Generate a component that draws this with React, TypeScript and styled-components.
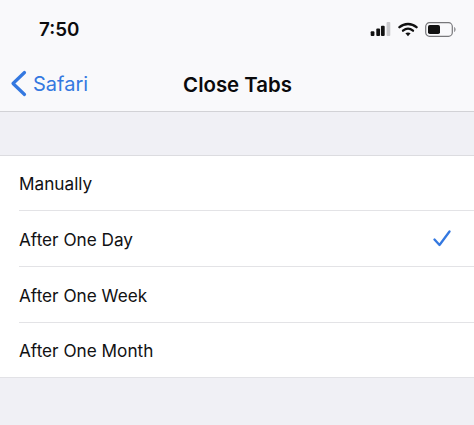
import styled, { createGlobalStyle } from "styled-components"

const options = ["Manually", "After One Day", "After One Week", "After One Month"]
const selected = "After One Day"

const GlobalStyle = createGlobalStyle`
    html, body {
        margin: 0;
        padding: 0;
        background: #f0f0f5;
    }
    body {
        font-family: "Inter", "Liberation Sans", sans-serif;
    }
`

const App = () => {
    return (
        <Screen>
            <GlobalStyle />
            <Header>
                <StatusBar>
                    <Time>7:50</Time>
                    <StatusIcons>
                        <svg width="21" height="14" viewBox="0 0 21 15">
                            <rect x="0" y="10" width="4" height="5" rx="1" fill="#111" />
                            <rect x="6" y="7" width="4" height="8" rx="1" fill="#111" />
                            <rect x="11" y="4" width="4" height="11" rx="1" fill="#111" />
                            <rect x="17" y="0" width="4" height="15" rx="1" fill="#c9c9cc" />
                        </svg>
                        <svg width="20" height="15" viewBox="0 0 20 15">
                            <path d="M1.5 5.2C6.4.9 13.6.9 18.5 5.2" fill="none" stroke="#111" strokeWidth="2.4" strokeLinecap="round" />
                            <path d="M5 8.7c3-2.500 7-2.500 10 0" fill="none" stroke="#111" strokeWidth="2.300" strokeLinecap="round" />
                            <path d="M7.400 11.300 10 14.200l2.600-2.900c-1.500-1.200-3.700-1.200-5.200 0z" fill="#111" />
                        </svg>
                        <svg width="31" height="15" viewBox="0 0 31 15">
                            <rect x="0.700" y="0.700" width="26.600" height="13.600" rx="3.800" fill="none" stroke="#77777a" strokeWidth="1.200" />
                            <rect x="3" y="3" width="12" height="9" rx="1.800" fill="#111" />
                            <path d="M29 5v5c1-.3 1.700-1.300 1.700-2.500S30 5.300 29 5z" fill="#9a9a9e" />
                        </svg>
                    </StatusIcons>
                </StatusBar>
                <NavBar>
                    <BackLink>
                        <svg width="17" height="27" viewBox="0 0 17 27">
                            <path d="M14.500 2.500 3 13.500l11.500 11" fill="none" stroke="#3478e0" strokeWidth="3.200" strokeLinecap="round" strokeLinejoin="round" />
                        </svg>
                        <BackLabel>Safari</BackLabel>
                    </BackLink>
                    <Title>Close Tabs</Title>
                </NavBar>
            </Header>
            <GroupSpacer />
            <OptionList>
                {options.map((option) => (
                    <OptionRow key={option}>
                        <OptionLabel>{option}</OptionLabel>
                        {option === selected && (
                            <svg width="18" height="17" viewBox="0 0 18 17">
                                <path d="M1.500 9.500 6.500 15 16.500 1.500" fill="none" stroke="#3478e0" strokeWidth="2.300" strokeLinecap="round" strokeLinejoin="round" />
                            </svg>
                        )}
                    </OptionRow>
                ))}
            </OptionList>
        </Screen>
    )
}

const Screen = styled.div`
    width: 474px;
    height: 425px;
    overflow: hidden;
    background: #f0f0f5;
`
const Header = styled.header`
    height: 111px;
    background: #f9f9fb;
    border-bottom: 1px solid #d2d2d6;
`
const StatusBar = styled.div`
    height: 58px;
    padding: 0 18px 0 39px;
    display: flex;
    align-items: center;
    justify-content: space-between;
`
const Time = styled.span`
    font-size: 18.800px;
    font-weight: 600;
    color: #0c0c0e;
`
const StatusIcons = styled.div`
    display: flex;
    align-items: center;
    gap: 7px;
`
const NavBar = styled.nav`
    position: relative;
    height: 53px;
    display: flex;
    align-items: center;
    justify-content: center;
    padding-left: 1px;
`
const BackLink = styled.div`
    position: absolute;
    left: 10px;
    top: 12px;
    display: flex;
    align-items: center;
    gap: 6px;
`
const BackLabel = styled.span`
    font-size: 20px;
    color: #3478e0;
`
const Title = styled.h1`
    margin: 0;
    font-size: 20.400px;
    font-weight: 600;
    color: #0a0a0c;
`
const GroupSpacer = styled.div`
    height: 42.600px;
`
const OptionList = styled.ul`
    margin: 0;
    padding: 0 0 0 19px;
    list-style: none;
    background: #fff;
    border-top: 1px solid #dcdce0;
    border-bottom: 1px solid #e2e2e6;
`
const OptionRow = styled.li`
    box-sizing: border-box;
    height: 55.700px;
    padding-right: 23px;
    display: flex;
    align-items: center;
    justify-content: space-between;
    border-bottom: 1px solid #e3e3e6;
    &:last-child {
        height: 54.300px;
        border-bottom: none;
    }
`
const OptionLabel = styled.span`
    padding-top: 2px;
    font-size: 17.200px;
    color: #111113;
`

export default App
